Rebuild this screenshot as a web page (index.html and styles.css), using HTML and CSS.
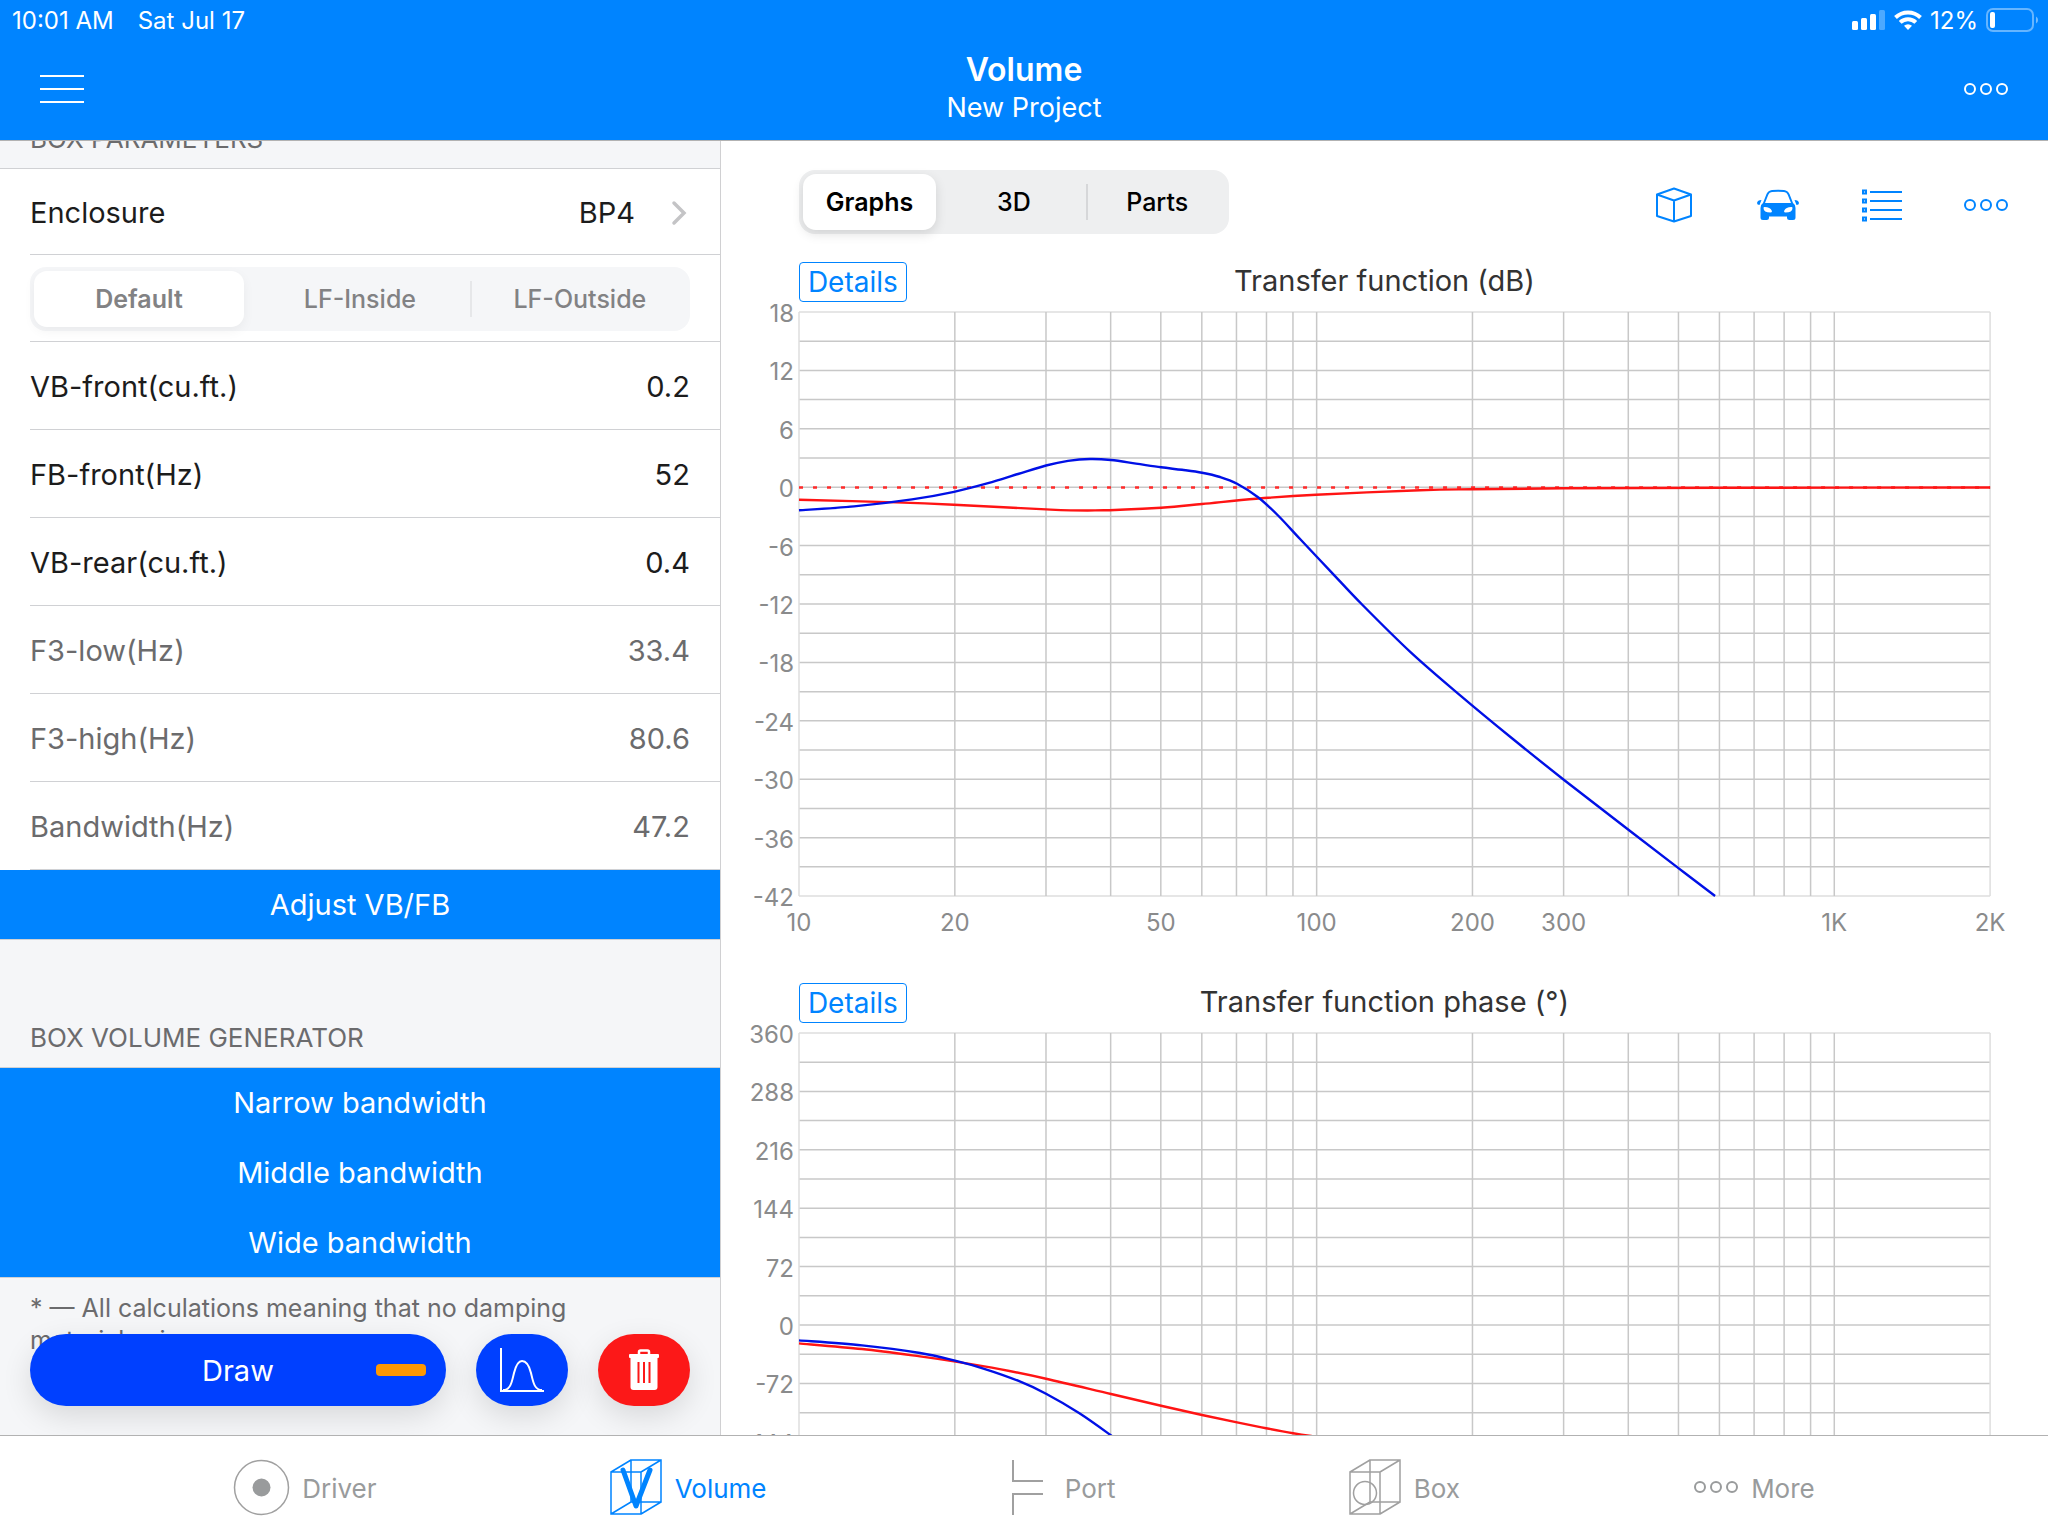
FILE: index.html
```html
<!DOCTYPE html>
<html lang="en">
<head>
    <meta charset="UTF-8">
    <meta name="viewport" content="width=device-width, initial-scale=1">
    <title>Volume - New Project</title>
    <link rel="stylesheet" href="styles.css">
</head>
<body>
    <header class="header">
        <div class="status-bar">
            <span>10:01 AM</span>
            <span>Sat Jul 17</span>
            <div class="status-right">
                <svg width="34" height="20" viewBox="0 0 34 20" fill="#fff">
                    <rect x="0" y="11" width="6" height="9" rx="1.5"/>
                    <rect x="9" y="8" width="6" height="12" rx="1.5"/>
                    <rect x="18" y="4" width="6" height="16" rx="1.5"/>
                    <rect x="27" y="0" width="6" height="20" rx="1.5" opacity="0.3"/>
                </svg>
                <svg width="28" height="20" viewBox="0 0 28 20" fill="none" stroke="#fff" stroke-width="4">
                    <path d="M1.5 7.5a18 18 0 0 1 25 0"/>
                    <path d="M6.2 12.4a11.3 11.3 0 0 1 15.6 0"/>
                    <path d="M14 20l-4-4.2a6 6 0 0 1 8 0z" fill="#fff" stroke="none"/>
                </svg>
                <span>12%</span>
                <svg width="54" height="24" viewBox="0 0 54 24">
                    <rect x="1" y="1" width="46" height="22" rx="6" fill="none" stroke="#fff" stroke-width="2" opacity="0.4"/>
                    <rect x="4" y="4" width="5" height="16" rx="2" fill="#fff"/>
                    <path d="M50 8.500a4 4 0 0 1 0 7z" fill="#fff" opacity="0.45"/>
                </svg>
            </div>
        </div>
        <div class="nav-bar">
            <button class="icon-button menu-button" type="button" aria-label="Menu">
                <svg width="44" height="30" viewBox="0 0 44 30" stroke="#fff" stroke-width="2">
                    <path d="M0 2h44M0 15h44M0 28h44"/>
                </svg>
            </button>
            <div class="nav-title">
                <h1>Volume</h1>
                <p>New Project</p>
            </div>
            <button class="icon-button more-button" type="button" aria-label="Project actions">
                <svg width="44" height="14" viewBox="0 0 44 14" fill="none" stroke="#fff" stroke-width="2">
                    <circle cx="6" cy="7" r="5"/><circle cx="22" cy="7" r="5"/><circle cx="38" cy="7" r="5"/>
                </svg>
            </button>
        </div>
    </header>

    <main class="main">
        <section class="sidebar">
            <h2 class="section-head section-head-cut">BOX PARAMETERS</h2>
            <div class="list">
                <button class="row row-link" type="button">
                    <span>Enclosure</span>
                    <span class="row-value">BP4</span>
                    <svg width="20" height="26" viewBox="0 0 20 26" fill="none" stroke="#c4c4c6" stroke-width="3.500" stroke-linecap="round">
                        <path d="M4 3l10 10-10 10"/>
                    </svg>
                </button>
                <div class="row row-segments">
                    <div class="segments segments-light">
                        <label><input type="radio" name="mount" checked><span>Default</span></label>
                        <label><input type="radio" name="mount"><span>LF-Inside</span></label>
                        <label><input type="radio" name="mount"><span>LF-Outside</span></label>
                    </div>
                </div>
                <div class="row">
                    <label for="vb-front">VB-front(cu.ft.)</label>
                    <input type="text" id="vb-front" value="0.2">
                </div>
                <div class="row">
                    <label for="fb-front">FB-front(Hz)</label>
                    <input type="text" id="fb-front" value="52">
                </div>
                <div class="row">
                    <label for="vb-rear">VB-rear(cu.ft.)</label>
                    <input type="text" id="vb-rear" value="0.4">
                </div>
                <div class="row row-result">
                    <span>F3-low(Hz)</span>
                    <span class="row-value">33.4</span>
                </div>
                <div class="row row-result">
                    <span>F3-high(Hz)</span>
                    <span class="row-value">80.6</span>
                </div>
                <div class="row row-result">
                    <span>Bandwidth(Hz)</span>
                    <span class="row-value">47.2</span>
                </div>
            </div>
            <div class="actions">
                <button type="button">Adjust VB/FB</button>
            </div>
            <h2 class="section-head">BOX VOLUME GENERATOR</h2>
            <div class="actions">
                <button type="button">Narrow bandwidth</button>
                <button type="button">Middle bandwidth</button>
                <button type="button">Wide bandwidth</button>
            </div>
            <p class="footnote">* — All calculations meaning that no damping material using.</p>

            <!-- floating over the list -->
            <div class="float-bar">
                <button class="pill pill-draw" type="button">Draw<span class="draw-color"></span></button>
                <button class="pill" type="button" aria-label="Response">
                    <svg width="46" height="46" viewBox="0 0 46 46" fill="none" stroke="#fff" stroke-width="2">
                        <path d="M2 1v43h43"/>
                        <path d="M4 43c8 0 9-9 11-17s4-12 8-12 7 4 9 12 3 17 11 17"/>
                    </svg>
                </button>
                <button class="pill pill-delete" type="button" aria-label="Delete">
                    <svg width="32" height="42" viewBox="0 0 32 42">
                        <path d="M11 6V3q0-1.500 1.500-1.500h7Q21 1.500 21 3v3" fill="none" stroke="#fff" stroke-width="2.500"/>
                        <rect x="1" y="5" width="30" height="4" rx="1" fill="#fff"/>
                        <path d="M2.500 8h27v30q0 3-3 3h-21q-3 0-3-3z" fill="#fff"/>
                        <path d="M10.500 13v21M16 13v21M21.500 13v21" stroke="#fc1818" stroke-width="2"/>
                    </svg>
                </button>
            </div>
        </section>

        <section class="content">
            <div class="toolbar">
                <div class="segments segments-view">
                    <label><input type="radio" name="view" checked><span>Graphs</span></label>
                    <label><input type="radio" name="view"><span>3D</span></label>
                    <label><input type="radio" name="view"><span>Parts</span></label>
                </div>
                <div class="tools">
                    <button class="icon-button" type="button" aria-label="Box">
                        <svg width="36" height="36" viewBox="0 0 36 36" fill="none" stroke="#0084ff" stroke-width="2" stroke-linejoin="round">
                            <path d="M18 1.500l17 6v21.500l-17 5.500-17-5.500V7.500zM1 7.500l17 6 17-6M18 13.500v21"/>
                        </svg>
                    </button>
                    <button class="icon-button" type="button" aria-label="Car">
                        <svg width="44" height="32" viewBox="0 0 44 32" fill="#0084ff">
                            <path fill-rule="evenodd" d="M7 14l3.500-9q1.600-3.300 5.500-3.900 6-.8 12 0 3.900.6 5.500 3.900L37 14q2.500 1.500 2.500 5v9.500q0 2.500-2.500 2.500h-3.500q-2.500 0-2.500-2.500V27.500H13v1q0 2.500-2.500 2.500H7q-2.500 0-2.500-2.500V19q0-3.500 2.500-5zM9 14h26l-3.300-8.300q-.9-2.200-3.700-2.600-6-.7-12 0-2.800.4-3.700 2.600zM7.500 19q0 4.500 7 4.500 1.800 0 1.300-1.800-1.800-3.800-7.300-3.700-1 0-1 1zM36.500 19q0 4.500-7 4.500-1.800 0-1.300-1.800 1.800-3.800 7.300-3.700 1 0 1 1z"/>
                            <path d="M5.500 11l-2 5q-2.500 0-2.500-2Q1.500 11 5.500 11zM38.500 11l2 5q2.500 0 2.500-2-.5-3-4.500-3z"/>
                        </svg>
                    </button>
                    <button class="icon-button" type="button" aria-label="List">
                        <svg width="42" height="34" viewBox="0 0 42 34" fill="none" stroke="#0084ff" stroke-width="2">
                            <path d="M9 4h32M9 13h32M9 22h32M9 31h32"/>
                            <path d="M2 2.500h3v3H2zM2 11.500h3v3H2zM2 20.500h3v3H2zM2 29.500h3v3H2z"/>
                        </svg>
                    </button>
                    <button class="icon-button" type="button" aria-label="More">
                        <svg width="44" height="14" viewBox="0 0 44 14" fill="none" stroke="#0084ff" stroke-width="2">
                            <circle cx="6" cy="7" r="5"/><circle cx="22" cy="7" r="5"/><circle cx="38" cy="7" r="5"/>
                        </svg>
                    </button>
                </div>
            </div>

            <div class="chart">
                <div class="chart-head">
                    <button class="details" type="button">Details</button>
                    <h3>Transfer function (dB)</h3>
                </div>
                <svg class="plot" id="transfer" viewBox="0 0 1327 640"></svg>
            </div>
            <div class="chart">
                <div class="chart-head">
                    <button class="details" type="button">Details</button>
                    <h3>Transfer function phase (°)</h3>
                </div>
                <svg class="plot" id="phase" viewBox="0 0 1327 640"></svg>
            </div>
        </section>
    </main>

    <nav class="tab-bar">
        <a href="#driver">
            <svg width="57" height="57" viewBox="0 0 57 57">
                <circle cx="28.500" cy="28.500" r="27" fill="none" stroke="#a0a0a0" stroke-width="1.500"/>
                <circle cx="28.500" cy="28.500" r="9" fill="#999b9c"/>
            </svg>
            <span>Driver</span>
        </a>
        <a href="#volume" class="active">
            <svg width="53" height="57" viewBox="0 0 53 57" fill="none" stroke="currentColor" stroke-width="1.500">
                <path d="M1 13h30v42H1zM21 1h30v42H21zM1 13L21 1M31 13L51 1M1 55l20-12M31 55l20-12"/>
                <path d="M13 11l13 36 14-36" stroke-width="5" stroke-linecap="round" stroke-linejoin="round"/>
            </svg>
            <span>Volume</span>
        </a>
        <a href="#port">
            <svg width="53" height="57" viewBox="-11 0 53 57" fill="none" stroke="#a0a0a0" stroke-width="2">
                <path d="M2 1v21h30M2 56V35h30"/>
            </svg>
            <span>Port</span>
        </a>
        <a href="#box">
            <svg width="53" height="57" viewBox="0 0 53 57" fill="none" stroke="#a0a0a0" stroke-width="1.500">
                <path d="M1 13h30v42H1zM21 1h30v42H21zM1 13L21 1M31 13L51 1M1 55l20-12M31 55l20-12"/>
                <circle cx="16" cy="34" r="11.500"/>
            </svg>
            <span>Box</span>
        </a>
        <a href="#more">
            <svg width="46" height="14" viewBox="0 0 46 14" fill="none" stroke="#999b9c" stroke-width="2">
                <circle cx="7" cy="7" r="5"/><circle cx="23" cy="7" r="5"/><circle cx="39" cy="7" r="5"/>
            </svg>
            <span>More</span>
        </a>
    </nav>
    <script src="charts.js"></script>
</body>
</html>
```
FILE: charts.js
```js
// plot area inside the 1327x640 viewBox
var LEFT = 78, TOP = 10, WIDTH = 1191, HEIGHT = 584;
var NS = "http://www.w3.org/2000/svg";

function add(svg, name, attrs, text) {
    var el = document.createElementNS(NS, name);
    for (var key in attrs) {
        el.setAttribute(key, attrs[key]);
    }
    if (text !== undefined) {
        el.textContent = text;
    }
    svg.appendChild(el);
}

// logarithmic frequency axis, 10 Hz - 2 kHz
function freqX(hz) {
    return LEFT + WIDTH * Math.log10(hz / 10) / Math.log10(200);
}

function drawGrid(svg, max, step) {
    for (var i = 0; i <= 20; i++) {
        var y = TOP + HEIGHT * i / 20;
        var edge = i === 0 || i === 20 ? " edge" : "";
        add(svg, "path", {"class": "grid" + edge, d: "M" + LEFT + " " + y + "h" + WIDTH});
        if (i % 2 === 0) {
            add(svg, "text", {"class": "tick tick-y", x: LEFT - 5, y: y + 10}, max - step * i / 2);
        }
    }
    [10, 100, 1000].forEach(function(decade) {
        for (var n = 1; n < 10; n++) {
            var hz = decade * n;
            if (hz <= 2000) {
                var edge = hz === 10 || hz === 2000 ? " edge" : "";
                add(svg, "path", {"class": "grid" + edge, d: "M" + freqX(hz) + " " + TOP + "v" + HEIGHT});
            }
        }
    });
    [10, 20, 50, 100, 200, 300, 1000, 2000].forEach(function(hz) {
        var label = hz >= 1000 ? hz / 1000 + "K" : hz;
        add(svg, "text", {"class": "tick tick-x", x: freqX(hz), y: TOP + HEIGHT + 35}, label);
    });
}

// smooth line through the points
function drawCurve(svg, type, p) {
    var d = "M" + p[0][0] + " " + (p[0][1] + TOP);
    for (var i = 0; i < p.length - 1; i++) {
        var a = p[i - 1] || p[i], b = p[i], c = p[i + 1], e = p[i + 2] || c;
        d += "C" + [
            b[0] + (c[0] - a[0]) / 6, b[1] + (c[1] - a[1]) / 6 + TOP,
            c[0] - (e[0] - b[0]) / 6, c[1] - (e[1] - b[1]) / 6 + TOP,
            c[0], c[1] + TOP
        ].join(" ");
    }
    add(svg, "path", {"class": "curve " + type, d: d});
}

var transfer = document.getElementById("transfer");
drawGrid(transfer, 18, 6);
add(transfer, "path", {"class": "curve zero", d: "M" + LEFT + " " + (TOP + 175.5) + "h" + WIDTH});
drawCurve(transfer, "red", [[78, 187.7], [175, 190.4], [233, 192.7], [325, 197.4], [374, 198.4], [440, 195.7], [481, 192], [535, 186.7], [595, 182.7], [699, 178.3], [751, 177.2], [842, 176.3], [1000, 175.8], [1269, 175.5]]);
drawCurve(transfer, "blue", [[78, 198.3], [133, 194.4], [191, 187.4], [233, 179.8], [267, 171.2], [297, 162], [325, 153.5], [347, 148.9], [369, 147], [390, 148], [415, 151.6], [440, 155.3], [461, 157.8], [481, 160.7], [499, 165], [516, 171.7], [537, 185.2], [557, 203.5], [579, 227], [610, 259.8], [641, 292.5], [690, 340.6], [740, 384.1], [790, 425.5], [843, 467.9], [908, 518.2], [958, 556.6], [994, 584]]);

var phase = document.getElementById("phase");
drawGrid(phase, 360, 72);
drawCurve(phase, "red", [[78, 310.4], [141, 316], [199, 323.4], [233, 328.4], [280, 336.4], [325, 345.7], [390, 361], [440, 372.7], [481, 382], [516, 389.4], [545, 395.2], [572, 400.2], [590, 403], [620, 407]]);
drawCurve(phase, "blue", [[78, 307.4], [141, 312.4], [199, 320], [233, 327.4], [264, 336], [297, 347.7], [325, 360.7], [358, 380], [390, 402.4], [420, 425]]);
```
FILE: styles.css
```css
* {
    box-sizing: border-box;
}
body {
    margin: 0;
    height: 100vh;
    display: flex;
    flex-direction: column;
    overflow: hidden;
    background-color: #fff;
    color: #1c1c1c;
    font-family: Inter, "Liberation Sans", sans-serif;
    font-size: 29px;
}
h1, h2, h3, p {
    margin: 0;
    font-weight: 400;
}
button, input {
    font: inherit;
    color: inherit;
    border: none;
    background: none;
    padding: 0;
    margin: 0;
}
button {
    cursor: pointer;
}
svg {
    display: block;
    flex: none;
}

/* header */
.header {
    flex: none;
    background-color: #0084ff;
    color: #fff;
    border-bottom: 1px solid #b2b2b2;
}
.status-bar {
    display: flex;
    align-items: center;
    gap: 24px;
    height: 40px;
    padding: 0 8px 0 12px;
    font-size: 24px;
}
.status-right {
    display: flex;
    align-items: center;
    gap: 8px;
    margin-left: auto;
}
.nav-bar {
    display: grid;
    grid-template-columns: 1fr auto 1fr;
    height: 100px;
    padding: 0 40px;
}
.nav-title {
    padding-top: 9px;
    text-align: center;
}
.nav-title h1 {
    font-size: 32px;
    font-weight: 600;
    line-height: 42px;
}
.nav-title p {
    font-size: 27px;
    line-height: 34px;
}
.icon-button {
    display: flex;
    align-items: center;
    justify-content: center;
}
.menu-button {
    justify-self: start;
}
.more-button {
    justify-self: end;
}
.menu-button, .more-button {
    height: 98px;
}

/* left panel */
.main {
    flex: 1;
    min-height: 0;
    display: grid;
    grid-template-columns: 35.2% 1fr;
}
.sidebar {
    position: relative;
    overflow: hidden;
    background-color: #f5f6f8;
    border-right: 1px solid #d0d0d2;
}
.section-head {
    display: flex;
    align-items: flex-end;
    height: 128px;
    padding: 0 30px 14px;
    border-bottom: 1px solid #d0d1d4;
    color: #6b6b6d;
    font-size: 26px;
    line-height: 30px;
}
.section-head-cut {
    height: 28px;
    overflow: hidden;
}
.list {
    background-color: #fff;
    padding-left: 30px;
}
.row {
    display: flex;
    align-items: center;
    justify-content: space-between;
    width: 100%;
    height: 88px;
    padding: 2px 30px 0 0;
    border-bottom: 1px solid #d0d1d4;
}
.row-link {
    height: 86px;
    text-align: left;
}
.row-link .row-value {
    margin-left: auto;
    margin-right: 35px;
}
.row-segments {
    height: 87px;
}
.row input[type="text"] {
    width: 200px;
    text-align: right;
}
.row-result {
    color: #6b6b6d;
}
.segments {
    display: grid;
    grid-template-columns: repeat(3, 1fr);
    width: 100%;
    height: 64px;
    padding: 4px 0;
    border-radius: 16px;
    background-color: #eeeff0;
    font-size: 25px;
}
.segments label {
    position: relative;
    display: flex;
    cursor: pointer;
}
.segments label:first-child {
    padding: 0 6px 0 4px;
}
.segments input {
    position: absolute;
    opacity: 0;
}
.segments span {
    flex: 1;
    display: flex;
    align-items: center;
    justify-content: center;
    border-radius: 13px;
    font-weight: 500;
}
.segments input:checked + span {
    background-color: #fff;
    font-weight: 600;
    box-shadow: 0 4px 12px rgba(0, 0, 0, 0.12);
}
.segments label:last-child::before {
    content: "";
    position: absolute;
    left: 0;
    top: 10px;
    bottom: 10px;
    width: 2px;
    background-color: #d6d7d9;
}
.segments-light {
    background-color: #f5f6f8;
    color: #828284;
}
.segments-light input:checked + span {
    box-shadow: 0 4px 12px rgba(0, 0, 0, 0.05);
}
.segments-light label:last-child::before {
    background-color: #e6e7e9;
}
.segments-view {
    width: 430px;
    color: #000;
}
.actions {
    display: grid;
    gap: 1px;
    background-color: #0084ff;
    border-bottom: 1px solid #d0d1d4;
}
.actions button {
    height: 69px;
    color: #fff;
}
.footnote {
    padding: 14px 120px 0 30px;
    color: #6b6b6d;
    font-size: 25px;
    line-height: 32px;
}
.float-bar {
    position: absolute;
    left: 30px;
    right: 30px;
    bottom: 29px;
    display: flex;
    gap: 30px;
}
.pill {
    display: flex;
    align-items: center;
    justify-content: center;
    width: 92px;
    height: 72px;
    border-radius: 36px;
    background-color: #0040ff;
    color: #fff;
    box-shadow: 0 10px 30px rgba(0, 0, 0, 0.12);
}
.pill-draw {
    position: relative;
    flex: 1;
}
.draw-color {
    position: absolute;
    right: 20px;
    width: 50px;
    height: 12px;
    border-radius: 4px;
    background-color: #ff9800;
}
.pill-delete {
    background-color: #fc1818;
}

/* charts */
.content {
    overflow: hidden;
    padding-top: 29px;
}
.toolbar {
    display: flex;
    justify-content: space-between;
    margin-bottom: 28px;
    padding: 0 10px 0 78px;
}
.tools {
    display: flex;
    height: 64px;
}
.tools .icon-button {
    width: 104px;
    height: 70px;
}
.chart {
    margin-bottom: 41px;
}
.chart-head {
    position: relative;
    height: 40px;
}
.chart-head h3 {
    color: #333;
    line-height: 38px;
    text-align: center;
}
.chart-head h3 {
    font-size: 29px;
}
.details {
    position: absolute;
    left: 78px;
    top: 0;
    height: 40px;
    padding: 0 8px;
    border: 1px solid #0084ff;
    border-radius: 4px;
    color: #0084ff;
    font-size: 28px;
    line-height: 38px;
}
.plot {
    width: 100%;
    height: auto;
}
.grid {
    stroke: #c8c8c8;
    stroke-width: 1.5;
}
.edge {
    stroke: #dedede;
}
.tick {
    fill: #8a8b8c;
    font-size: 24px;
}
.tick-y {
    text-anchor: end;
}
.tick-x {
    text-anchor: middle;
}
.curve {
    fill: none;
    stroke-width: 2.4;
}
.red {
    stroke: #ff1414;
}
.blue {
    stroke: #0010e6;
}
.zero {
    stroke: #ff2a2a;
    stroke-dasharray: 4 10;
}

/* bottom tabs */
.tab-bar {
    flex: none;
    display: flex;
    justify-content: space-evenly;
    height: 101px;
    padding-top: 2px;
    border-top: 1px solid #b2b2b2;
    background-color: #fff;
    font-size: 26px;
}
.tab-bar a {
    display: flex;
    align-items: center;
    gap: 12px;
    color: #999b9c;
    text-decoration: none;
}
.tab-bar span {
    padding-top: 3px;
}
.tab-bar a.active {
    color: #0084ff;
}
```
